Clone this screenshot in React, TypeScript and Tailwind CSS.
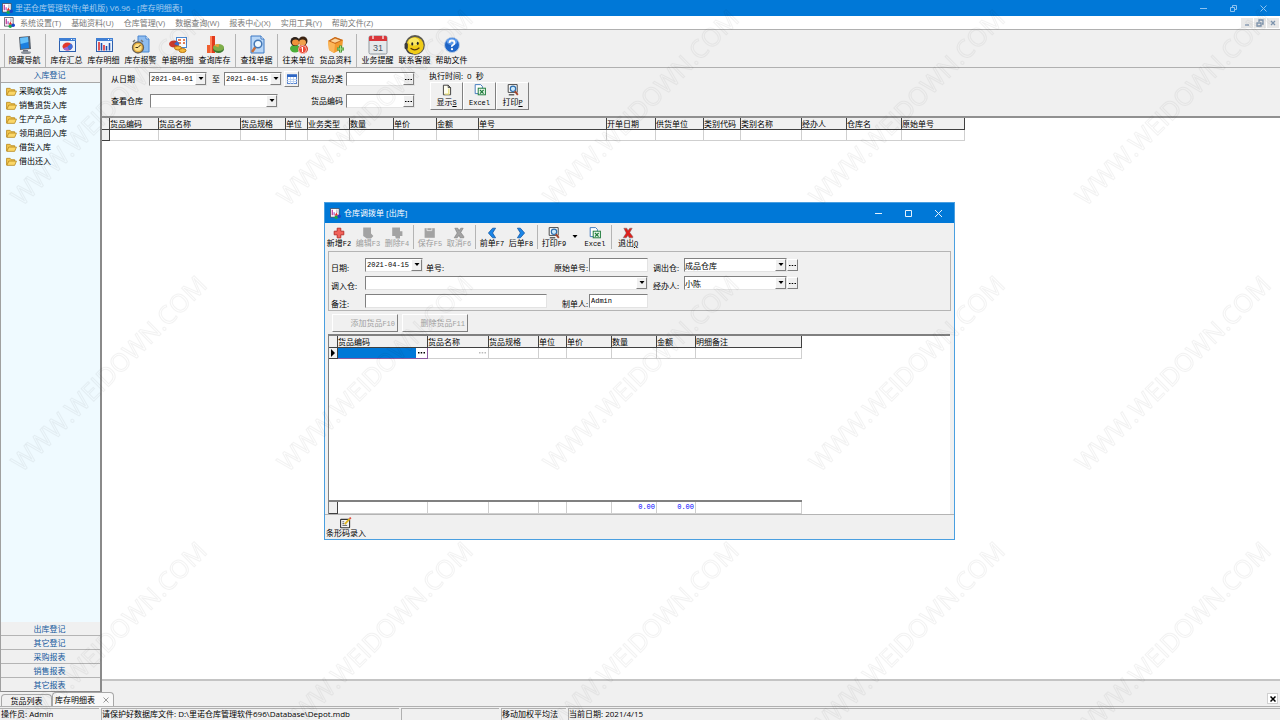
import type { ReactNode } from "react";

type Column = { title: string; width: string };

const menus = [
  "系统设置(T)",
  "基础资料(U)",
  "仓库管理(V)",
  "数据查询(W)",
  "报表中心(X)",
  "实用工具(Y)",
  "帮助文件(Z)",
];

const navItems = [
  "采购收货入库",
  "销售退货入库",
  "生产产品入库",
  "领用退回入库",
  "借货入库",
  "借出还入",
];

const navGroups = ["出库登记", "其它登记", "采购报表", "销售报表", "其它报表"];

const stockColumns: Column[] = [
  { title: "货品编码", width: "w-[49px]" },
  { title: "货品名称", width: "w-[82px]" },
  { title: "货品规格", width: "w-[45px]" },
  { title: "单位", width: "w-[22px]" },
  { title: "业务类型", width: "w-[42px]" },
  { title: "数量", width: "w-[44px]" },
  { title: "单价", width: "w-[43px]" },
  { title: "金额", width: "w-[42px]" },
  { title: "单号", width: "w-[128px]" },
  { title: "开单日期", width: "w-[49px]" },
  { title: "供货单位", width: "w-[48px]" },
  { title: "类别代码", width: "w-[37px]" },
  { title: "类别名称", width: "w-[61px]" },
  { title: "经办人", width: "w-[45px]" },
  { title: "仓库名", width: "w-[55px]" },
  { title: "原始单号", width: "w-[63px]" },
];

const orderColumns: Column[] = [
  { title: "货品编码", width: "w-[90px]" },
  { title: "货品名称", width: "w-[61px]" },
  { title: "货品规格", width: "w-[50px]" },
  { title: "单位", width: "w-[28px]" },
  { title: "单价", width: "w-[45px]" },
  { title: "数量", width: "w-[45px]" },
  { title: "金额", width: "w-[39px]" },
  { title: "明细备注", width: "w-[106px]" },
];

const sunken =
  "border border-t-[#808080] border-l-[#808080] border-r-[#e3e3e3] border-b-[#e3e3e3] bg-white";
const raised =
  "border border-t-white border-l-white border-r-[#808080] border-b-[#808080] bg-[#f0f0f0]";
const mono = "font-['Liberation_Mono','Noto_Sans_CJK_SC',monospace] text-[7px]";

/* ---------- icons ---------- */

const Logo = () => (
  <svg viewBox="0 0 12 12" className="size-[11px] shrink-0" fill="none">
    <path d="M.5.5h9.500v9.500H.5z" fill="#fff" stroke="#3b3b4a" strokeWidth=".8" />
    <path d="M2.500 2v6" stroke="#c9409a" strokeWidth="1.400" />
    <path d="M4.500 4.500v3.500" stroke="#8a4fc0" strokeWidth="1.200" />
    <path d="M7.500 1.500v4" stroke="#b9b9c9" strokeWidth="1.400" />
    <path d="M5 8.500L7 5l2 3.500z" fill="#e8252a" />
    <circle cx="6.800" cy="10" r="1.900" fill="#18a84c" />
    <circle cx="10" cy="9" r="2" fill="#1846c8" />
  </svg>
);

const Icon = ({ children, size = "size-5" }: { children: ReactNode; size?: string }) => (
  <svg viewBox="0 0 20 20" className={`${size} shrink-0`} fill="none">
    {children}
  </svg>
);

const MonitorIcon = () => (
  <Icon>
    <path d="M4 2l11-1 1 13-11 1z" fill="#5b6470" />
    <path d="M5 3l8-1 1 11-8 1z" fill="#1b7fe0" />
    <path d="M5 3l8-1 .4 5L5.600 9z" fill="#67c1fa" />
    <path d="M8 15h5v2H8z" fill="#6b7280" />
    <ellipse cx="11" cy="17.500" rx="5" ry="1.500" fill="#8b929b" />
  </Icon>
);

const WindowFrame = () => (
  <>
    <rect x="2.500" y="3.500" width="16" height="13" fill="#eaf3fd" stroke="#2d5fae" />
    <rect x="2" y="3" width="17" height="3" fill="#3f7fd4" />
    <path d="M14 4.500h1M16.500 4.500h1" stroke="#fff" />
  </>
);

const PieWindowIcon = () => (
  <Icon>
    <WindowFrame />
    <ellipse cx="10.500" cy="11.500" rx="5" ry="4" fill="#e2382c" />
    <path d="M10.500 11.500L14 8.500A5 4 0 0 1 12 15.300z" fill="#3b6fe0" />
    <path d="M10.500 11.500L12 15.300A5 4 0 0 1 6 13.500z" fill="#9b6ad8" />
  </Icon>
);

const BarWindowIcon = () => (
  <Icon>
    <WindowFrame />
    <path d="M5 7v8.500" stroke="#d22" strokeWidth="1.500" />
    <path d="M7.500 8v7.500" stroke="#1e4fa8" strokeWidth="1.500" />
    <path d="M10 10v5.500" stroke="#d22" strokeWidth="1.500" />
    <path d="M12.500 11v4.500" stroke="#1e4fa8" strokeWidth="1.500" />
    <path d="M15.500 8v7.500" stroke="#1e4fa8" strokeWidth="1.500" />
  </Icon>
);

const AlarmIcon = () => (
  <Icon>
    <path d="M7 1h8l3 3v13H7z" fill="#8fbdf0" stroke="#4a86cf" />
    <path d="M15 1v3h3" fill="#fff" stroke="#4a86cf" />
    <circle cx="7" cy="12.500" r="5.500" fill="#e8b040" stroke="#6b6254" strokeWidth="1.300" />
    <circle cx="7" cy="12.500" r="3.600" fill="#fde08a" />
    <path d="M7 12.500l2.500-2.500M7 12.500H4.500" stroke="#3a2c10" />
    <path d="M2 7l2-2M10 5l2 2" stroke="#777" strokeWidth="1.500" />
  </Icon>
);

const DetailIcon = () => (
  <Icon>
    <rect x="8.500" y="2.500" width="10" height="10" fill="#fff" stroke="#4a86cf" />
    <path d="M10 5h3M15 5h2M10 8h3M15 8h2" stroke="#e25822" strokeWidth="1.500" />
    <ellipse cx="6" cy="9" rx="5" ry="3.500" fill="#c93a2a" />
    <path d="M6 9L9 6.200A5 3.500 0 0 1 10.500 11z" fill="#3c6fd0" />
    <ellipse cx="10" cy="13" rx="3.500" ry="2" fill="#f6b93b" stroke="#b87514" />
    <ellipse cx="14.500" cy="15.500" rx="3.500" ry="2" fill="#f6b93b" stroke="#b87514" />
  </Icon>
);

const QueryStockIcon = () => (
  <Icon>
    <path d="M2 10h3v8H2z" fill="#f0602f" />
    <path d="M5 1h5v17H5z" fill="#e33a1c" />
    <path d="M5 1h2v17H5z" fill="#ff8158" />
    <ellipse cx="13.500" cy="14" rx="5.500" ry="4" fill="#3f7d32" />
    <ellipse cx="13.500" cy="12.500" rx="5.500" ry="3.500" fill="#7fae4a" />
    <path d="M13.500 12.500L9 10.500A5.500 3.500 0 0 1 14 9z" fill="#e8a33c" />
  </Icon>
);

const FindIcon = () => (
  <Icon>
    <path d="M4 1h10l3 3v14H4z" fill="#b9d7f7" stroke="#3d79c4" />
    <path d="M14 1v3h3" fill="#fff" stroke="#3d79c4" />
    <path d="M8.500 12l-3.500 5" stroke="#c96f3a" strokeWidth="2.500" />
    <circle cx="11" cy="9" r="3.800" fill="#eef8ff" stroke="#4477b4" strokeWidth="1.500" />
  </Icon>
);

const PeopleIcon = () => (
  <Icon>
    <ellipse cx="6" cy="13.500" rx="5" ry="4" fill="#4caf3a" />
    <ellipse cx="14" cy="14" rx="5" ry="4.500" fill="#d63a22" />
    <circle cx="6" cy="6.500" r="4.500" fill="#2b211b" />
    <circle cx="14" cy="6" r="4.500" fill="#3b2414" />
    <ellipse cx="6.500" cy="7.500" rx="3.500" ry="3" fill="#f0913a" />
    <ellipse cx="13.500" cy="7.500" rx="3.500" ry="3" fill="#f0a04b" />
    <circle cx="13.500" cy="14.500" r="4" fill="#ec4b37" stroke="#fff" strokeWidth="0.600" />
    <path d="M13.500 12v5M12 13.500l1.500-1.500" stroke="#fff" />
  </Icon>
);

const BoxIcon = () => (
  <Icon>
    <path d="M2 6l7-4 8 3-1 9-8 4-5-3z" fill="#f29a2e" />
    <path d="M2 6l7-4 8 3-8 4z" fill="#c8671a" />
    <path d="M4.500 6L9 3.500l5.500 2L9 7.800z" fill="#fbd49a" />
    <path d="M2 6l7 3-1 9-5-3z" fill="#fbb659" />
    <path d="M14.500 10.500v7M11 14h7" stroke="#4f9a3a" strokeWidth="3" />
    <path d="M14.500 11v6M11.500 14h6" stroke="#a8e08a" strokeWidth="1" />
  </Icon>
);

const CalendarIcon = () => (
  <Icon>
    <rect x="1" y="1" width="18" height="18" rx="1.500" fill="#e6e9eb" stroke="#8f979d" />
    <path d="M1 2.500Q1 1 2.500 1h15Q19 1 19 2.500V6H1z" fill="#d9363a" />
    <path d="M5 0v4M15 0v4" stroke="#f6d6d6" strokeWidth="1.500" />
    <text x="10" y="15.500" textAnchor="middle" fontSize="9" fill="#4b5560" fontFamily="Liberation Sans">
      31
    </text>
  </Icon>
);

const ServiceIcon = () => (
  <Icon size="size-[22px]">
    <circle cx="10" cy="10" r="9" fill="#5c5a50" />
    <circle cx="10" cy="10.500" r="7.800" fill="#f0cc18" />
    <ellipse cx="9" cy="7" rx="5" ry="3.500" fill="#f9e765" />
    <ellipse cx="7.500" cy="9" rx="0.900" ry="1.400" fill="#222" />
    <ellipse cx="12.500" cy="8.500" rx="0.900" ry="1.400" fill="#222" />
    <path d="M6 13q4 3 8-.5" stroke="#5b3a0c" />
    <rect x="0.500" y="8" width="3" height="6" rx="1.500" fill="#3d3d3d" />
    <path d="M2 13q1 5 6 5" stroke="#444" />
  </Icon>
);

const HelpIcon = () => (
  <Icon>
    <circle cx="10" cy="10" r="7.500" fill="#1f66c9" stroke="#b8cbe4" />
    <ellipse cx="10" cy="6.500" rx="5.500" ry="3.500" fill="#5b9bee" />
    <path d="M7.500 8q0-2.500 2.500-2.500T12.500 8q0 1.200-1.500 2T10 11.800" stroke="#fff" strokeWidth="1.800" />
    <circle cx="10" cy="14.200" r="1.100" fill="#fff" />
  </Icon>
);

const FolderIcon = () => (
  <svg viewBox="0 0 12 10" className="h-[9px] w-[11px] shrink-0" fill="none">
    <path d="M.5 9V1.500h4l1 1.500h4V5" fill="#f2c64c" stroke="#b98a1e" strokeWidth=".9" />
    <path d="M.8 9.300L3 4.500h8.500L9.500 9.300z" fill="#fbd768" stroke="#b98a1e" strokeWidth=".9" />
  </svg>
);

const GridIcon = () => (
  <svg viewBox="0 0 10 10" className="size-[10px]" fill="none">
    <rect x=".5" y=".5" width="9" height="9" fill="#fff" stroke="#5b87d0" />
    <path d="M0 1h10v2H0z" fill="#2e66c4" />
    <path d="M3.500 3v7M6.500 3v7M0 5.500h10M0 7.500h10" stroke="#b3cbf0" strokeWidth=".8" />
  </svg>
);

const PageIcon = () => (
  <Icon size="size-3">
    <path d="M4 2h8l4 4v12H4z" fill="#fffef0" stroke="#333" strokeWidth="1.500" />
    <path d="M12 2v4h4" stroke="#333" strokeWidth="1.500" />
    <path d="M13 8v9H6" stroke="#e6dd7a" strokeWidth="2" />
  </Icon>
);

const ExcelIcon = () => (
  <Icon size="size-3">
    <path d="M2 1h9l3 3v12H2z" fill="#fff" stroke="#3572b8" strokeWidth="1.500" />
    <rect x="7" y="7" width="12" height="11" fill="#e8f7ea" stroke="#1d7a3a" strokeWidth="1.600" />
    <path d="M10 10l6 6M16 10l-6 6" stroke="#1d7a3a" strokeWidth="2" />
  </Icon>
);

const PreviewIcon = () => (
  <Icon size="size-3">
    <path d="M2 1h15v13H2z" fill="#fff" stroke="#444" strokeWidth="1.600" />
    <circle cx="10" cy="8" r="4.500" fill="#cde9fb" stroke="#2b6fb0" strokeWidth="2" />
    <path d="M13 12l5 6" stroke="#a5442a" strokeWidth="3" />
    <path d="M3 18h9" stroke="#444" strokeWidth="2" />
  </Icon>
);

const PlusIcon = () => (
  <Icon size="size-3">
    <path d="M7 2h6v5h5v6h-5v5H7v-5H2V7h5z" fill="#f2625a" stroke="#b52a24" strokeWidth="1.500" />
  </Icon>
);

const EditIcon = () => (
  <Icon size="size-3">
    <path d="M2 1h13v10l4 4-4 4H8l-6-4z" fill="#a3a3a3" />
  </Icon>
);

const RemoveIcon = () => (
  <Icon size="size-3">
    <path d="M2 1h13v6h4v8h-4v4H8l-1-4H2z" fill="#a3a3a3" />
  </Icon>
);

const SaveIcon = () => (
  <Icon size="size-3">
    <path d="M1 2h17v16H1z" fill="#a3a3a3" />
    <path d="M5 2v4h8V2" stroke="#e4e4e4" strokeWidth="1.500" />
  </Icon>
);

const CrossIcon = ({ color }: { color: string }) => (
  <Icon size="size-3">
    <path d="M3 2h5l2 4 3-4h4l-4 7 5 7v2h-6l-2-4-3 4H2l5-8z" fill={color} stroke="#6b6b6b" strokeWidth=".8" />
  </Icon>
);

const ArrowIcon = ({ flip }: { flip?: boolean }) => (
  <Icon size="size-3">
    <path
      d={flip ? "M4 2h5l7 8-7 8H4l5-8z" : "M16 2h-5l-7 8 7 8h5l-5-8z"}
      fill="#1a86e8"
      stroke="#0d4f9e"
      strokeWidth="1.200"
    />
  </Icon>
);

const BarcodeIcon = () => (
  <Icon size="size-3">
    <rect x="1" y="4" width="15" height="14" rx="1" fill="#f6f6f6" stroke="#333" strokeWidth="1.800" />
    <path d="M4 8h3M4 11h3M4 14h8" stroke="#555" strokeWidth="1.500" />
    <path d="M8 12l8-9" stroke="#e0b51e" strokeWidth="3" />
    <path d="M16 3l2-2" stroke="#e0463a" strokeWidth="3" />
  </Icon>
);

const Triangle = () => (
  <svg viewBox="0 0 6 4" className="h-1 w-1.5">
    <path d="M.5 0h5L3 3z" fill="#000" />
  </svg>
);

/* ---------- small controls ---------- */

const DropMark = () => (
  <span
    className={`pointer-events-none absolute inset-y-0 right-0 flex w-[11px] items-center justify-center ${raised}`}
  >
    <Triangle />
  </span>
);

const DateBox = ({ id, value }: { id: string; value: string }) => (
  <div className={`relative h-[14px] w-[58px] ${sunken}`}>
    <input id={id} defaultValue={value} className={`block h-full w-full pl-px leading-3 outline-none ${mono}`} />
    <DropMark />
  </div>
);

const Combo = ({ id, width, value = "" }: { id: string; width: string; value?: string }) => (
  <div className={`relative h-[14px] ${width} ${sunken}`}>
    <select id={id} className="block h-full w-full appearance-none leading-[11px] outline-none">
      <option>{value}</option>
    </select>
    <DropMark />
  </div>
);

const Dots = ({ label }: { label: string }) => (
  <button
    type="button"
    aria-label={label}
    className={`flex h-3 w-[11px] shrink-0 items-center justify-center self-center ${raised}`}
  >
    <svg viewBox="0 0 7 1" className="h-px w-[7px]">
      <path d="M0 0h1.500v1H0zM2.700 0h1.500v1H2.700zM5.500 0H7v1H5.500z" fill="#000" />
    </svg>
  </button>
);

const LookupBox = ({ id, label }: { id: string; label: string }) => (
  <div className={`flex h-[14px] w-[69px] ${sunken}`}>
    <input id={id} className="block h-full min-w-0 flex-1 outline-none" />
    <Dots label={label} />
  </div>
);

const Tool = ({ icon, text }: { icon: ReactNode; text: string }) => (
  <button className="flex w-[37px] flex-col items-center whitespace-nowrap">
    <span className="flex h-[21px] items-center">{icon}</span>
    <span className="leading-[10px]">{text}</span>
  </button>
);

const Divider = () => <span className="mx-0.5 w-px self-stretch bg-[#b4b4b4]" />;

const SmallTool = ({
  icon,
  text,
  hotkey,
  disabled,
}: {
  icon: ReactNode;
  text: string;
  hotkey?: string;
  disabled?: boolean;
}) => (
  <button
    disabled={disabled}
    className="flex w-7 flex-col items-center whitespace-nowrap disabled:text-[#9c9c9c]"
  >
    {icon}
    <span className="leading-2">
      {text}
      {hotkey && <span className={mono}>{hotkey}</span>}
    </span>
  </button>
);

const HeadRow = ({ columns, mark }: { columns: Column[]; mark: string }) => (
  <thead>
    <tr className="h-3">
      <th className={`${mark} border-r border-b border-[#404040] bg-[#f0f0f0]`} />
      {columns.map((c) => (
        <th
          key={c.title}
          className={`${c.width} border-r border-b border-[#404040] bg-[#f0f0f0] p-0 text-left leading-[11px] font-normal`}
        >
          {c.title}
        </th>
      ))}
    </tr>
  </thead>
);

/* ---------- page parts ---------- */

const TitleBar = () => (
  <header className="flex h-4 items-center bg-[#0078d7] pl-0.5 text-[#a9cdee]">
    <Logo />
    <h1 className="ml-0.5 text-[8px]">里诺仓库管理软件(单机版) V6.96 - [库存明细表]</h1>
    <div className="mr-3 ml-auto flex gap-[21px]">
      <button aria-label="最小化">
        <svg viewBox="0 0 9 9" className="size-[9px]" fill="none" stroke="#8cc2f0">
          <path d="M1 4.500h7" />
        </svg>
      </button>
      <button aria-label="还原">
        <svg viewBox="0 0 9 9" className="size-[9px]" fill="none" stroke="#8cc2f0">
          <path d="M1.500 3.500h4v4h-4zM3.500 3V1.500h4v4H6" />
        </svg>
      </button>
      <button aria-label="关闭">
        <svg viewBox="0 0 9 9" className="size-[9px]" fill="none" stroke="#8cc2f0">
          <path d="M1.500 1.500l6 6M7.500 1.500l-6 6" />
        </svg>
      </button>
    </div>
  </header>
);

const MenuBar = () => (
  <nav className="flex h-[13px] items-center bg-white pl-1 text-[#777]">
    <Logo />
    <div className="ml-[5px] flex gap-2.5">
      {menus.map((m) => (
        <button key={m} className="whitespace-nowrap">
          {m}
        </button>
      ))}
    </div>
    <div className="mr-px ml-auto flex gap-px">
      {["M3 7h4", "M2 5h4v3H2zM4 4V2h4v4H7", "M3 3l4 4M7 3L3 7"].map((d, i) => (
        <button key={d} aria-label={["最小化", "还原", "关闭"][i]} className="bg-[#e8e8e8] px-px">
          <svg viewBox="0 0 10 10" className="size-[10px]" fill="none" stroke="#7d94ad" strokeWidth="1.300">
            <path d={d} />
          </svg>
        </button>
      ))}
    </div>
  </nav>
);

const MainToolbar = () => (
  <div className="flex h-[39px] items-stretch border-t border-b border-[#b0b0b0] bg-[#f0f0f0] px-1 pt-1">
    <span className="mr-px w-px bg-[#b4b4b4]" />
    <Tool icon={<MonitorIcon />} text="隐藏导航" />
    <Divider />
    <Tool icon={<PieWindowIcon />} text="库存汇总" />
    <Tool icon={<BarWindowIcon />} text="库存明细" />
    <Tool icon={<AlarmIcon />} text="库存报警" />
    <Tool icon={<DetailIcon />} text="单据明细" />
    <Tool icon={<QueryStockIcon />} text="查询库存" />
    <Divider />
    <Tool icon={<FindIcon />} text="查找单据" />
    <Divider />
    <Tool icon={<PeopleIcon />} text="往来单位" />
    <Tool icon={<BoxIcon />} text="货品资料" />
    <Divider />
    <Tool icon={<CalendarIcon />} text="业务提醒" />
    <Tool icon={<ServiceIcon />} text="联系客服" />
    <Tool icon={<HelpIcon />} text="帮助文件" />
  </div>
);

const Sidebar = () => (
  <aside className="flex w-[102px] shrink-0 flex-col border-r-2 border-b border-l border-r-[#8a8a8a] border-b-[#8a8a8a] border-l-[#a0a0a0] bg-[#effaff]">
    <button className="h-[15px] border-b border-[#a8a8a8] bg-[#f0f0f0] pr-0.5 text-center text-[#14599c]">
      入库登记
    </button>
    <ul className="flex-1 pt-px">
      {navItems.map((item) => (
        <li key={item}>
          <a href="#" className="flex h-[14px] items-center gap-0.5 pl-[5px]">
            <FolderIcon />
            {item}
          </a>
        </li>
      ))}
    </ul>
    {navGroups.map((group) => (
      <button
        key={group}
        className="h-[14px] border-b border-[#b4b4b4] bg-[#f0f0f0] pr-0.5 text-center leading-[13px] text-[#14599c] last:h-[13px] last:border-b-0"
      >
        {group}
      </button>
    ))}
  </aside>
);

const FilterButton = ({ icon, text }: { icon: ReactNode; text: ReactNode }) => (
  <button
    type="button"
    className={`flex h-7 w-[33px] flex-col items-center justify-center gap-px ${raised}`}
  >
    {icon}
    <span className="leading-[10px] whitespace-nowrap">{text}</span>
  </button>
);

const Filters = () => (
  <form className="flex h-[50px] items-start gap-3 border-b-2 border-[#909090] bg-[#f0f0f0] pl-[9px]">
    <div className="flex flex-col gap-[7px] pt-[3px]">
      <div className="flex h-4 items-center">
        <label htmlFor="from" className="w-[38px]">
          从日期
        </label>
        <DateBox id="from" value="2021-04-01" />
        <label htmlFor="to" className="w-[17px] pl-[5px]">
          至
        </label>
        <DateBox id="to" value="2021-04-15" />
        <button
          type="button"
          aria-label="选择日期"
          className={`ml-0.5 flex h-4 w-[15px] items-center justify-center ${raised}`}
        >
          <GridIcon />
        </button>
      </div>
      <div className="flex items-center">
        <label htmlFor="depot" className="w-[39px]">
          查看仓库
        </label>
        <Combo id="depot" width="w-[128px]" />
      </div>
    </div>
    <div className="flex flex-col gap-[7px] pt-[3px]">
      <div className="flex h-4 items-center">
        <label htmlFor="category" className="w-[35px]">
          货品分类
        </label>
        <LookupBox id="category" label="选择分类" />
      </div>
      <div className="flex items-center">
        <label htmlFor="code" className="w-[35px]">
          货品编码
        </label>
        <LookupBox id="code" label="选择货品" />
      </div>
    </div>
    <div className="pt-0.5 pl-0.5">
      <p className="flex gap-1">
        <span>执行时间:</span>
        <span>0</span>
        <span>秒</span>
      </p>
      <div className="ml-px flex">
        <FilterButton
          icon={<PageIcon />}
          text={
            <>
              显示<u className={mono}>S</u>
            </>
          }
        />
        <FilterButton icon={<ExcelIcon />} text={<span className={mono}>Excel</span>} />
        <FilterButton
          icon={<PreviewIcon />}
          text={
            <>
              打印<u className={mono}>P</u>
            </>
          }
        />
      </div>
    </div>
  </form>
);

const StockTable = () => (
  <table className="w-[863px] table-fixed border-separate border-spacing-0">
    <HeadRow columns={stockColumns} mark="w-2" />
    <tbody>
      <tr className="h-[11px]">
        <td className="border-r border-b border-[#404040] bg-[#f0f0f0]" />
        {stockColumns.map((c) => (
          <td key={c.title} className="border-r border-b border-[#cfcfcf]" />
        ))}
      </tr>
    </tbody>
  </table>
);

const OrderTable = () => (
  <div className="flex h-[180px] flex-col justify-between border-t-2 border-l border-[#808080] bg-white">
    <table className="w-[473px] table-fixed border-separate border-spacing-0">
      <HeadRow columns={orderColumns} mark="w-[9px]" />
      <tbody>
        <tr className="h-[11px]">
          <td className="border-r border-b border-[#404040] bg-[#f0f0f0] p-0">
            <svg viewBox="0 0 4 8" className="ml-0.5 h-2 w-1">
              <path d="M0 0l4 4-4 4z" fill="#000" />
            </svg>
          </td>
          <td className="border-r border-b border-[#8c5aa0] bg-[#0078d7] p-0">
            <button
              aria-label="选择货品编码"
              className="ml-auto flex h-2.5 w-[11px] items-center justify-center bg-white"
            >
              <svg viewBox="0 0 7 2" className="h-0.5 w-[7px]">
                <path d="M0 0h1.500v1.500H0zM2.700 0h1.500v1.500H2.700zM5.500 0H7v1.500H5.500z" fill="#000" />
              </svg>
            </button>
          </td>
          <td className="border-r border-b border-[#cfcfcf] p-0">
            <button
              aria-label="选择货品名称"
              className="ml-auto flex h-2.5 w-[11px] items-center justify-center"
            >
              <svg viewBox="0 0 7 2" className="h-0.5 w-[7px]">
                <path d="M0 0h1.500v1.500H0zM2.700 0h1.500v1.500H2.700zM5.500 0H7v1.500H5.500z" fill="#bbb" />
              </svg>
            </button>
          </td>
          {orderColumns.slice(2).map((c) => (
            <td key={c.title} className="border-r border-b border-[#cfcfcf]" />
          ))}
        </tr>
      </tbody>
    </table>
    <table className="w-[473px] table-fixed border-separate border-spacing-0 border-t-2 border-[#808080]">
      <tbody>
        <tr className="h-3">
          <td className="w-[9px] border-r border-b border-[#404040] bg-[#f0f0f0]" />
          {orderColumns.map((c) => (
            <td
              key={c.title}
              className={`${c.width} border-r border-b border-[#cfcfcf] p-0 pr-px text-right leading-[11px] text-[#0000ff] ${mono}`}
            >
              {c.title === "数量" || c.title === "金额" ? "0.00" : ""}
            </td>
          ))}
        </tr>
      </tbody>
    </table>
  </div>
);

const TransferForm = () => (
  <form className="mr-[3px] ml-[3px] flex flex-col gap-1 border border-[#b4b4b4] pt-1.5 pb-0.5 pl-0.5 leading-[9px]">
    <div className="flex h-[14px] items-end">
      <label htmlFor="date" className="w-[34px]">
        日期:
      </label>
      <div className="flex w-[283px] items-end">
        <DateBox id="date" value="2021-04-15" />
        <span className="ml-[3px]">单号:</span>
        <label htmlFor="source" className="mr-px ml-auto">
          原始单号:
        </label>
        <input id="source" className={`h-[14px] w-[59px] outline-none ${sunken}`} />
      </div>
      <label htmlFor="out" className="w-9 pl-[5px]">
        调出仓:
      </label>
      <Combo id="out" width="w-[103px]" value="成品仓库" />
      <Dots label="选择调出仓" />
    </div>
    <div className="flex h-[14px] items-end">
      <label htmlFor="in" className="w-[34px]">
        调入仓:
      </label>
      <Combo id="in" width="w-[283px]" />
      <label htmlFor="handler" className="w-9 pl-[5px]">
        经办人:
      </label>
      <Combo id="handler" width="w-[103px]" value="小陈" />
      <Dots label="选择经办人" />
    </div>
    <div className="flex h-[14px] items-end">
      <label htmlFor="remark" className="w-[34px]">
        备注:
      </label>
      <div className="flex w-[283px] items-end">
        <input id="remark" className={`h-[14px] w-[182px] outline-none ${sunken}`} />
        <label htmlFor="maker" className="mr-px ml-auto">
          制单人:
        </label>
        <input
          id="maker"
          defaultValue="Admin"
          className={`h-[14px] w-[59px] pl-px outline-none ${sunken} ${mono}`}
        />
      </div>
    </div>
  </form>
);

const TransferDialog = () => (
  <section
    role="dialog"
    aria-label="仓库调拨单 [出库]"
    className="absolute top-[202px] left-[324px] flex w-[631px] flex-col border border-[#4a9fe0] bg-[#f0f0f0]"
  >
    <div className="flex h-5 items-center bg-[#0078d7] pr-[11px] pl-[5px] text-white">
      <Logo />
      <h2 className="ml-[3px] text-[8px]">仓库调拨单 [出库]</h2>
      <div className="ml-auto flex gap-[21px]">
        {["M1 4.500h7", "M1.500 1.500h6v6h-6z", "M1 1l7 7M8 1L1 8"].map((d, i) => (
          <button key={d} aria-label={["最小化", "最大化", "关闭"][i]}>
            <svg viewBox="0 0 9 9" className="size-[9px]" fill="none" stroke="#e4f1fc">
              <path d={d} />
            </svg>
          </button>
        ))}
      </div>
    </div>

    <div className="flex h-7 items-center gap-px">
      <SmallTool icon={<PlusIcon />} text="新增" hotkey="F2" />
      <SmallTool icon={<EditIcon />} text="编辑" hotkey="F3" disabled />
      <SmallTool icon={<RemoveIcon />} text="删除" hotkey="F4" disabled />
      <span className="mx-px h-6 w-px bg-[#b4b4b4]" />
      <SmallTool icon={<SaveIcon />} text="保存" hotkey="F5" disabled />
      <SmallTool icon={<CrossIcon color="#a3a3a3" />} text="取消" hotkey="F6" disabled />
      <span className="mx-px h-6 w-px bg-[#b4b4b4]" />
      <SmallTool icon={<ArrowIcon />} text="前单" hotkey="F7" />
      <SmallTool icon={<ArrowIcon flip />} text="后单" hotkey="F8" />
      <span className="mx-px h-6 w-px bg-[#b4b4b4]" />
      <SmallTool icon={<PreviewIcon />} text="打印" hotkey="F9" />
      <button aria-label="打印选项" className="flex w-[11px] justify-center">
        <Triangle />
      </button>
      <SmallTool icon={<ExcelIcon />} text="" hotkey="Excel" />
      <span className="mx-px h-6 w-px bg-[#b4b4b4]" />
      <button className="flex w-7 flex-col items-center whitespace-nowrap">
        <CrossIcon color="#e0201c" />
        <span className="leading-2">
          退出<u className={mono}>Q</u>
        </span>
      </button>
    </div>

    <TransferForm />

    <div className="mb-0.5 flex gap-1 pt-[3px] pl-[7px] text-[#a0a0a0]">
      <button disabled className={`h-[18px] w-[66px] pr-0.5 text-right ${raised}`}>
        添加货品<span className={mono}>F10</span>
      </button>
      <button disabled className={`h-[18px] w-[66px] pr-0.5 text-right ${raised}`}>
        删除货品<span className={mono}>F11</span>
      </button>
    </div>

    <div className="mr-1 ml-[3px]">
      <OrderTable />
    </div>

    <div className="flex h-[25px] items-center border-t border-[#b4b4b4] pl-px">
      <button className="flex flex-col items-center">
        <BarcodeIcon />
        <span className="leading-2">条形码录入</span>
      </button>
    </div>
  </section>
);

const BottomTabs = () => (
  <div className="flex h-[15px] items-end border-b border-[#b0b0b0] bg-[#f0f0f0] pl-px">
    <button className="h-3 w-[51px] rounded-t-sm border border-b-0 border-[#a8a8a8] text-center leading-[10px]">
      货品列表
    </button>
    <div className="flex h-[14px] w-[62px] items-center justify-between rounded-t-sm border border-b-0 border-[#a8a8a8] bg-[#f8f8f8] pr-1 pl-0.5">
      <button>库存明细表</button>
      <button aria-label="关闭标签">
        <svg viewBox="0 0 6 6" className="size-1.5" stroke="#999">
          <path d="M.5.5l5 5M5.500.5l-5 5" />
        </svg>
      </button>
    </div>
    <button
      aria-label="关闭页面"
      className="mr-0.5 mb-0.5 ml-auto flex size-[11px] items-center justify-center border border-[#d0d0d0] bg-white"
    >
      <svg viewBox="0 0 6 6" className="size-1.5" stroke="#000" strokeWidth="1.500">
        <path d="M.5.5l5 5M5.500.5l-5 5" />
      </svg>
    </button>
  </div>
);

const StatusBar = () => (
  <footer className="flex h-[13px] gap-0.5 bg-[#f0f0f0] pt-px leading-[10px]">
    <span className="w-[99px] border-t border-[#b0b0b0] pl-px">操作员: Admin</span>
    <span className="w-[298px] border-t border-l border-[#b0b0b0]">
      请保护好数据库文件: D:\里诺仓库管理软件696\Database\Depot.mdb
    </span>
    <span className="w-[98px] border-t border-l border-[#b0b0b0]" />
    <span className="w-[65px] border-t border-l border-[#b0b0b0]">移动加权平均法</span>
    <span className="flex-1 border-t border-l border-[#b0b0b0]">当前日期: 2021/4/15</span>
  </footer>
);

const Watermark = () => (
  <svg aria-hidden="true" className="pointer-events-none absolute inset-0 h-full w-full">
    <defs>
      <pattern id="mark" width="266" height="266" patternUnits="userSpaceOnUse">
        <text
          transform="translate(22 207) rotate(-45)"
          fontFamily="Open Sans"
          fontSize="25"
          fill="none"
          stroke="#000"
          strokeOpacity="0.05"
        >
          WWW.WEIDOWN.COM
        </text>
      </pattern>
    </defs>
    <rect width="100%" height="100%" fill="url(#mark)" />
  </svg>
);

export default function App() {
  return (
    <div className="relative flex min-h-screen flex-col overflow-hidden bg-[#f0f0f0] font-['Open_Sans','Noto_Sans_CJK_SC',sans-serif] text-[8px] leading-3 text-black">
      <TitleBar />
      <MenuBar />
      <MainToolbar />
      <div className="flex flex-1">
        <Sidebar />
        <main className="flex min-w-0 flex-1 flex-col">
          <Filters />
          <div className="flex-1 bg-white">
            <StockTable />
          </div>
          <div className="h-[13px] border-t-2 border-[#c4c4c4]" />
        </main>
      </div>
      <BottomTabs />
      <StatusBar />
      <TransferDialog />
      <Watermark />
    </div>
  );
}
